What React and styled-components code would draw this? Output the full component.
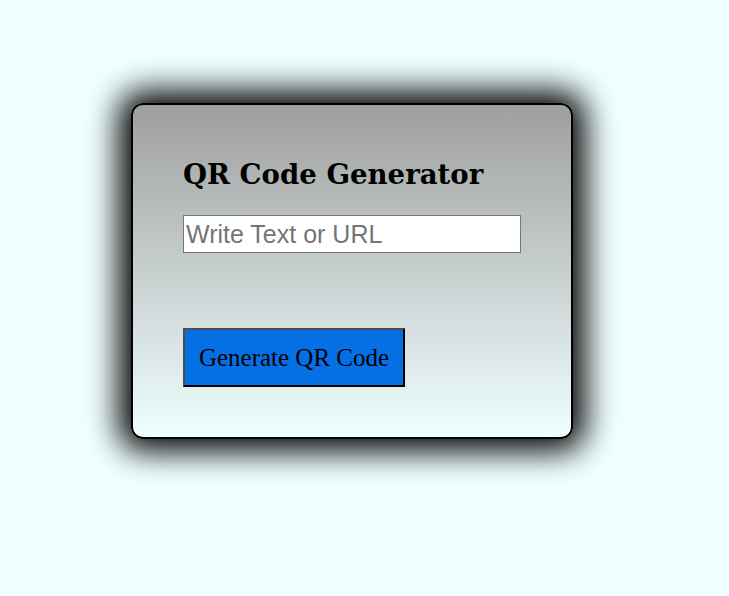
import React from "react";
import styled, { createGlobalStyle } from "styled-components";

const Global = createGlobalStyle`
  html, body { margin: 0; padding: 0; }
  body { background: #f0ffff; font-family: "Liberation Serif", serif; }
`;

const Page = styled.div`
  min-height: 596px;
  padding: 103px 0 0 131px;
  box-sizing: border-box;
`;

const Card = styled.div`
  width: 442px;
  box-sizing: border-box;
  padding: 50px;
  border: 2px solid #000;
  border-radius: 12px;
  background: linear-gradient(to bottom, #9e9f9e, #f0ffff);
  box-shadow: 0 0 32px 12px #000;
  display: flex;
  flex-direction: column;
  align-items: flex-start;
`;

const Title = styled.h1`
  margin: 0;
  font-family: "DejaVu Serif", Georgia, serif;
  font-weight: bold;
  font-size: 27.6px;
  line-height: 40px;
  color: #000;
`;

const Input = styled.input`
  margin-top: 20px;
  width: 338px;
  height: 38px;
  box-sizing: border-box;
  border: 1px solid #767676;
  padding: 0 2px;
  font-family: "Liberation Sans", Arial, sans-serif;
  font-size: 25px;
  background: #fff;
  &::placeholder { color: #757575; }
`;

const Button = styled.button`
  margin-top: 75px;
  width: 222px;
  height: 59px;
  box-sizing: border-box;
  background: #0570e6;
  border: 2px solid;
  border-color: #4d4d4d #000 #000 #4d4d4d;
  font-family: "Liberation Serif", Cambria, serif;
  font-size: 25px;
  color: #000;
  padding: 0;
`;

export default function App() {
  return (
    <>
      <Global />
      <Page>
        <Card>
          <Title>QR Code Generator</Title>
          <Input placeholder="Write Text or URL" />
          <Button>Generate QR Code</Button>
        </Card>
      </Page>
    </>
  );
}
